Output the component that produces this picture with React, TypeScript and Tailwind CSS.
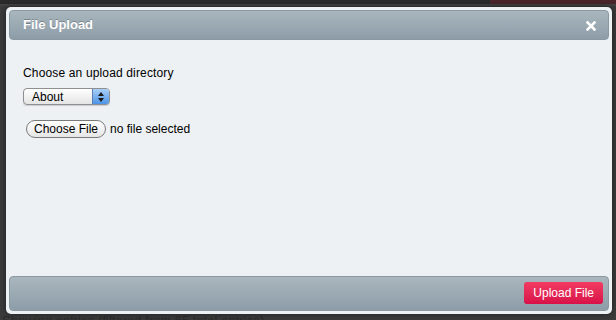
import React from "react";

export default function App() {
  return (
    <div className="relative w-[616px] h-[320px] overflow-hidden bg-[#3b3b3b]" style={{ fontFamily: '"Liberation Sans", Arial, sans-serif' }}>
      {/* page behind the overlay */}
      <div className="absolute inset-0 flex flex-col">
        <div className="flex h-[4px] shrink-0">
          <div className="w-[490px] bg-[#2a2a2a]" />
          <div className="flex-1 bg-[#4a252c]" />
        </div>
        <div className="h-[2px] bg-[#434343]" />
        <div className="flex-1" />
        <div className="pl-[2px] text-[13px] leading-[16px] text-[#2c2c2c] -mb-[9px]">Showing entries (filtered from 65 total entries)</div>
      </div>

      {/* dialog */}
      <div className="absolute left-[6px] top-[7px] w-[606px] h-[307px] bg-[#edf1f4] rounded-[5px] p-[3px] flex flex-col shadow-[0_0_6px_rgba(0,0,0,0.5)]">
        <div className="h-[30px] shrink-0 rounded-[4px] border border-[#8a98a2] bg-gradient-to-b from-[#a9b6bd] to-[#8d9da8] flex items-center justify-between pl-[13px] pr-[12px]">
          <span className="text-white font-bold text-[13px] [text-shadow:0_-1px_0_rgba(0,0,0,0.25)]">File Upload</span>
          <svg width="10" height="10" viewBox="0 0 10 10" className="mt-[1px]">
            <path d="M1.5 1.5 L8.5 8.5 M8.5 1.5 L1.5 8.5" stroke="white" strokeWidth="2.6" strokeLinecap="square" />
          </svg>
        </div>

        <div className="flex-1 flex flex-col items-start pl-[14px] pt-[26px]">
          <div className="text-[12px] leading-[14px] text-black tracking-[0.15px]">Choose an upload directory</div>
          <div className="mt-[8px] relative w-[87px] h-[17px] rounded-[4px] border border-[#8f8f8f] bg-gradient-to-b from-white to-[#e4e4e4] flex items-center shadow-[0_1px_1px_rgba(0,0,0,0.15)]">
            <span className="pl-[8px] text-[12px] leading-[14px] text-black flex-1">About</span>
            <div className="w-[17px] h-[15px] rounded-r-[3px] bg-gradient-to-b from-[#a9d0f7] to-[#4d93e6] border-l border-[#5a7fb0] flex flex-col items-center justify-center gap-[2px]">
              <svg width="6" height="4" viewBox="0 0 6 4"><path d="M3 0 L6 4 L0 4 Z" fill="#1a1a1a" /></svg>
              <svg width="6" height="4" viewBox="0 0 6 4"><path d="M0 0 L6 0 L3 4 Z" fill="#1a1a1a" /></svg>
            </div>
          </div>
          <div className="mt-[15px] ml-[3px] flex items-center gap-[4px]">
            <div className="h-[18px] px-[7px] rounded-full border border-[#7a7a7a] bg-gradient-to-b from-white to-[#e6e6e6] text-[12px] leading-[16px] text-black flex items-center">Choose File</div>
            <span className="text-[12px] text-black">no file selected</span>
          </div>
        </div>

        <div className="h-[35px] shrink-0 rounded-[4px] border border-[#8a98a2] bg-gradient-to-b from-[#a9b6bd] to-[#8d9da8] flex items-center justify-end pr-[5px]">
          <div className="h-[22px] px-[9px] rounded-[3px] bg-gradient-to-b from-[#f23a62] to-[#d80f48] text-white text-[12px] flex items-center mb-[1px]">Upload File</div>
        </div>
      </div>
    </div>
  );
}
